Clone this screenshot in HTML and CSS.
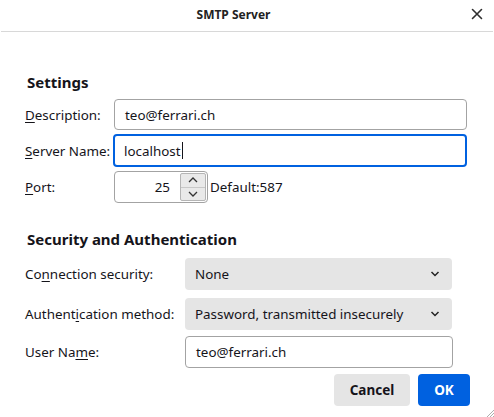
FILE: index.html
```html
<!DOCTYPE html>
<html>
<head>
<meta charset="utf-8">
<link rel="stylesheet" href="styles.css">
</head>
<body>
<div class="dialog">
  <header class="titlebar">
    <div class="title">SMTP Server</div>
    <div class="close">
      <svg width="12" height="12" viewBox="0 0 12 12"><path d="M1.5 1.5 L10.5 10.5 M10.5 1.5 L1.5 10.5" stroke="#2e2e2e" stroke-width="1.6" stroke-linecap="round"/></svg>
    </div>
  </header>
  <main class="content">
    <h2 class="heading h-settings">Settings</h2>
    <div class="row r-desc">
      <label class="lbl lbl1"><u>D</u>escription:</label>
      <div class="field wide">teo@ferrari.ch</div>
    </div>
    <div class="row r-server">
      <label class="lbl lbl1"><u>S</u>erver Name:</label>
      <div class="field wide focused">localhost<span class="caret"></span></div>
    </div>
    <div class="row r-port">
      <label class="lbl lbl1"><u>P</u>ort:</label>
      <div class="field port"><span class="num">25</span>
        <div class="spin">
          <div class="spin-btn up"><svg width="10" height="6" viewBox="0 0 10 6"><path d="M1 5 L5 1 L9 5" fill="none" stroke="#333" stroke-width="1.3"/></svg></div>
          <div class="spin-btn down"><svg width="10" height="6" viewBox="0 0 10 6"><path d="M1 1 L5 5 L9 1" fill="none" stroke="#333" stroke-width="1.3"/></svg></div>
        </div>
      </div>
      <span class="default">Default:587</span>
    </div>

    <h2 class="heading h-sec">Security and Authentication</h2>
    <div class="row2 r-conn">
      <label class="lbl lbl2">Co<u>n</u>nection security:</label>
      <div class="select">None<svg class="chev" width="10" height="6" viewBox="0 0 10 6"><path d="M1.5 1 L5 4.5 L8.5 1" fill="none" stroke="#222" stroke-width="1.5"/></svg></div>
    </div>
    <div class="row2 r-auth">
      <label class="lbl lbl2">Authent<u>i</u>cation method:</label>
      <div class="select">Password, transmitted insecurely<svg class="chev" width="10" height="6" viewBox="0 0 10 6"><path d="M1.5 1 L5 4.5 L8.5 1" fill="none" stroke="#222" stroke-width="1.5"/></svg></div>
    </div>
    <div class="row2 r-user">
      <label class="lbl lbl2">User Na<u>m</u>e:</label>
      <div class="field user">teo@ferrari.ch</div>
    </div>
    <div class="buttons">
      <button class="btn cancel">Cancel</button>
      <button class="btn ok">OK</button>
    </div>
  </main>
  <div class="grip">
    <svg width="8" height="8" viewBox="0 0 8 8"><path d="M8 1 L1 8 M8 4 L4 8 M8 7 L7 8" stroke="#999" stroke-width="0.8"/></svg>
  </div>
</div>
</body>
</html>
```
FILE: styles.css
```css
html, body {
  margin: 0;
  padding: 0;
  background: #ffffff;
}
body {
  font-family: "Noto Sans", "Open Sans", sans-serif;
  font-size: 13.4px;
  color: #15141a;
  width: 494px;
  height: 417px;
  overflow: hidden;
}
.dialog {
  position: relative;
  width: 494px;
  height: 417px;
}
.titlebar {
  height: 31px;
  border-bottom: 1px solid #d8d8d8;
  margin: 0 1px;
  display: flex;
  align-items: center;
  justify-content: center;
  position: relative;
}
.title {
  font-weight: bold;
  font-size: 12px;
  color: #222;
  margin-left: -27px;
  margin-top: -3px;
}
.close {
  position: absolute;
  right: 10px;
  top: 8px;
  width: 12px;
  height: 12px;
  display: flex;
}
.content {
  padding: 0 27px 0 25px;
}
.heading {
  margin: 0;
  font-size: 15px;
  font-weight: bold;
  padding-left: 2px;
  line-height: 20px;
}
.h-settings {
  margin-top: 40px;
  margin-bottom: 7px;
}
.row {
  display: flex;
  align-items: center;
}
.lbl {
  white-space: nowrap;
}
.lbl u {
  text-decoration-thickness: 1px;
  text-underline-offset: 2px;
}
.lbl1 {
  width: 89px;
  flex: none;
}
.field {
  box-sizing: border-box;
  border: 1px solid #a3a3a3;
  border-radius: 4px;
  height: 31px;
  display: flex;
  align-items: center;
  padding-left: 10px;
  background: #fff;
}
.wide {
  width: 353px;
}
.r-desc { height: 31px; }
.r-server { margin-top: 4px; height: 33px; }
.r-server .lbl1 { width: 88px; }
.focused {
  border: 2px solid #0061e0;
  width: 354px;
  height: 33px;
  padding-left: 9px;
}
.caret {
  display: inline-block;
  width: 1px;
  height: 17px;
  background: #15141a;
  margin-left: 1px;
}
.r-port { margin-top: 4px; height: 32px; }
.port {
  width: 94px;
  height: 32px;
  padding: 0 1px 0 0;
  justify-content: flex-end;
}
.num {
  margin-right: 10px;
}
.spin {
  width: 26px;
  height: 28px;
  display: flex;
  flex-direction: column;
  border: 1px solid #b5b5b5;
  border-radius: 2px;
  box-sizing: border-box;
  background: #e9e9e9;
}
.spin-btn {
  flex: 1;
  display: flex;
  align-items: center;
  justify-content: center;
}
.spin-btn.up {
  border-bottom: 1px solid #c8c8c8;
}
.default {
  margin-left: 2px;
}
.h-sec {
  margin-top: 26px;
  margin-bottom: 9px;
}
.row2 {
  display: flex;
  align-items: center;
}
.lbl2 {
  width: 160px;
  flex: none;
}
.select {
  box-sizing: border-box;
  width: 267px;
  height: 32px;
  border-radius: 4px;
  background: #e5e5e5;
  display: flex;
  align-items: center;
  padding: 0 12px 0 10px;
  justify-content: space-between;
}
.r-auth { margin-top: 8px; }
.r-user { margin-top: 6px; }
.user {
  width: 268px;
  height: 32px;
}
.buttons {
  display: flex;
  justify-content: flex-end;
  gap: 8px;
  margin-top: 6px;
  margin-right: -3px;
}
.btn {
  font-family: "Noto Sans", "Open Sans", sans-serif;
  font-size: 13.5px;
  font-weight: bold;
  border: none;
  border-radius: 4px;
  height: 32px;
  padding: 0;
}
.cancel {
  width: 76px;
  background: #e5e5e5;
  color: #15141a;
}
.ok {
  width: 52px;
  background: #0061e0;
  color: #fff;
}
.grip {
  position: absolute;
  right: 0;
  bottom: 0;
  width: 8px;
  height: 8px;
  display: flex;
}
```
